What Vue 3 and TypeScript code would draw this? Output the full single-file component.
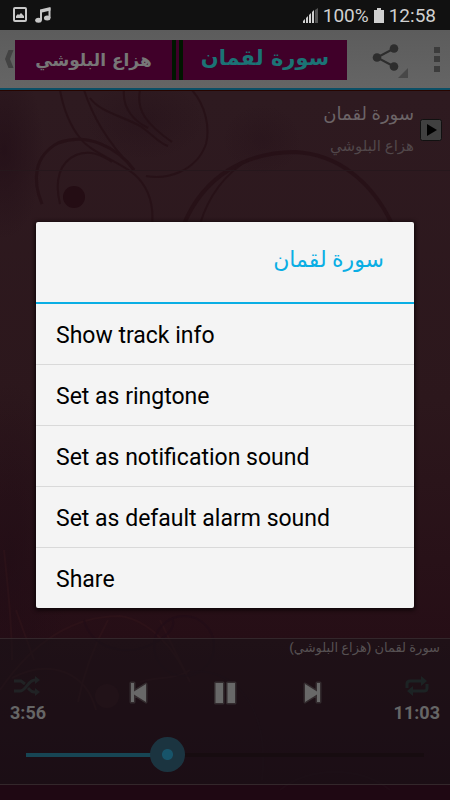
<script setup lang="ts">
import { computed, ref } from 'vue'

const surah = 'سورة لقمان'
const reciter = 'هزاع البلوشي'
const actions: string[] = [
  'Show track info',
  'Set as ringtone',
  'Set as notification sound',
  'Set as default alarm sound',
  'Share',
]
const duration = 663
const position = ref<number>(236)
const progress = computed(() => position.value / duration)

function clock(seconds: number): string {
  return Math.floor(seconds / 60) + ':' + String(seconds % 60).padStart(2, '0')
}
</script>

<template>
  <div class="screen">
    <svg class="ornament" viewBox="0 0 450 710" preserveAspectRatio="xMidYMin slice" aria-hidden="true">
      <defs>
        <radialGradient id="blotch">
          <stop offset="0" stop-color="#200c15" stop-opacity="0.6" />
          <stop offset="1" stop-color="#200c15" stop-opacity="0" />
        </radialGradient>
      </defs>
      <ellipse cx="4" cy="60" rx="40" ry="90" fill="url(#blotch)" />
      <ellipse cx="145" cy="30" rx="60" ry="40" fill="url(#blotch)" opacity="0.5" />
      <ellipse cx="262" cy="50" rx="40" ry="36" fill="url(#blotch)" opacity="0.4" />
      <ellipse cx="10" cy="470" rx="60" ry="180" fill="url(#blotch)" />
      <g fill="none" stroke="#250f15" stroke-width="2" opacity="0.75">
        <path d="M60 0C64 22 72 38 80 48C90 62 120 72 134 84C150 98 154 116 152 136" />
        <path d="M42 114C32 90 34 66 58 53C88 42 118 58 134 80" stroke-width="3" />
        <path d="M60 114C54 90 60 72 76 65C90 60 100 64 112 72" />
        <path d="M84 0C92 24 104 48 134 80" />
        <path d="M90 8C100 22 122 26 140 36C152 44 160 54 168 56" />
        <path d="M124 0C122 20 136 32 148 38" />
        <path d="M140 0C136 20 146 34 172 52" />
        <path d="M192 0C206 16 210 38 206 54C196 82 166 90 146 86" />
        <path d="M184 134C204 86 246 62 295 62C338 64 372 92 392 134" stroke-width="4" />
        <path d="M200 134C208 108 222 86 248 70" />
      </g>
      <circle cx="74" cy="107" r="11" fill="#240d14" />
      <g fill="none" stroke="#30141a" stroke-width="2" opacity="0.6">
        <path d="M0 600C30 556 70 526 120 526C150 530 176 560 190 592" />
        <path d="M12 588C50 568 86 582 96 620" />
        <path d="M78 612C84 580 94 556 108 530" />
        <path d="M4 460C8 500 12 530 12 570" />
        <path d="M16 520L34 570" />
        <path d="M140 592C160 586 176 590 190 580" />
        <path d="M160 530L186 584" />
      </g>
      <g fill="none" stroke="#220d17" stroke-width="2" opacity="0.7">
        <path d="M84 530C90 556 124 570 156 552C170 544 176 536 172 528" />
        <circle cx="184" cy="556" r="30" />
        <path d="M190 582C236 576 270 620 262 690" />
        <path d="M280 700C310 676 360 676 390 700" />
      </g>
      <circle cx="107" cy="606" r="12" fill="#30141a" opacity="0.6" />
    </svg>

    <div class="status">
      <div class="status-side">
        <svg width="14" height="16" viewBox="0 0 14 16" aria-hidden="true">
          <rect x="1" y="1" width="12" height="13" rx="1" fill="none" stroke="#c8c8c8" stroke-width="2" />
          <path d="M3 11V9l2-2 1 1 2-2 3 3v2z" fill="#c8c8c8" />
        </svg>
        <svg width="16" height="16" viewBox="0 0 16 16" aria-hidden="true">
          <path d="M5 2.4L15.500 0V3.400L7 5.400V13H5z" fill="#c8c8c8" />
          <path d="M13.500 1H15.500V11H13.500z" fill="#c8c8c8" />
          <ellipse cx="3.500" cy="13.200" rx="3.300" ry="2.500" fill="#c8c8c8" />
          <ellipse cx="12.200" cy="11" rx="3.300" ry="2.500" fill="#c8c8c8" />
        </svg>
      </div>
      <div class="status-side">
        <svg width="15" height="15" viewBox="0 0 15 15" aria-hidden="true">
          <path d="M0 15v-2l2-2v4zM3 15v-5l2-2v7zM6 15V7l2-2v10z" fill="#d0d0d0" />
          <path d="M9 15V4l2-2v13z" fill="#d0d0d0" />
          <path d="M12 15V2l3-2v15z" fill="#555" />
        </svg>
        <span>100%</span>
        <svg width="10" height="15" viewBox="0 0 10 15" aria-hidden="true">
          <path d="M3 0h4v2h3v13H0V2h3z" fill="#d0d0d0" />
        </svg>
        <span>12:58</span>
      </div>
    </div>

    <header class="bar">
      <button class="plain back" aria-label="Back">
        <svg width="10" height="18" viewBox="0 0 10 18" aria-hidden="true">
          <path d="M3.500 0H8.500L5 9l3.500 9H3.500L0 9z" fill="#434343" />
        </svg>
      </button>
      <div class="banner" dir="rtl">
        <span class="banner-surah">{{ surah }}</span>
        <span class="stripes"></span>
        <span class="banner-reciter">{{ reciter }}</span>
      </div>
      <button class="plain share" aria-label="Share">
        <svg width="36" height="34" viewBox="0 0 36 34" aria-hidden="true">
          <path d="M22 4.500L5 13.500l17 9" fill="none" stroke="#2d2d2d" stroke-width="2" />
          <g fill="#2d2d2d">
            <circle cx="22" cy="4.500" r="4.300" />
            <circle cx="5" cy="13.500" r="4.300" />
            <circle cx="22" cy="22.500" r="4.300" />
          </g>
          <path d="M36 24v10H26z" fill="#484848" />
        </svg>
      </button>
      <button class="plain more" aria-label="More options">
        <svg width="6" height="25" viewBox="0 0 6 25" aria-hidden="true">
          <path d="M0 0h6v6H0zM0 9h6v6H0zM0 19h6v6H0z" fill="#3c3c3c" />
        </svg>
      </button>
    </header>

    <main class="list">
      <button class="plain track" dir="rtl">
        <svg width="22" height="22" viewBox="0 0 22 22" aria-hidden="true">
          <rect x="0.500" y="0.500" width="21" height="21" rx="2" fill="#404040" stroke="#111" />
          <path d="M7 5l10 6-10 6z" fill="#000" />
        </svg>
        <span class="track-text">
          <span class="track-title">{{ surah }}</span>
          <span class="track-artist">{{ reciter }}</span>
        </span>
      </button>
    </main>

    <section class="player">
      <p class="now" dir="rtl">{{ surah }} ({{ reciter }})</p>
      <div class="controls">
        <div class="side">
          <button class="plain" aria-label="Shuffle">
            <svg width="28" height="20" viewBox="0 0 28 20" aria-hidden="true">
              <g fill="none" stroke="#202224" stroke-width="3">
                <path d="M1 5h7l4 3M1 15h6c6 0 8-11 15-11h1M15 12c2 2 3 4 6 4h2" />
              </g>
              <path d="M22 0l5 4-5 4zM22 12l5 4-5 4z" fill="#202224" />
            </svg>
          </button>
          <time>{{ clock(position) }}</time>
        </div>
        <div class="transport">
          <button class="plain" aria-label="Previous">
            <svg width="24" height="26" viewBox="0 0 24 26" aria-hidden="true">
              <path d="M5 3h3v8.500L20 4v18L8 14.500V22H5z" fill="#686868" stroke="#332b2e" stroke-width="3" stroke-linejoin="round" paint-order="stroke" />
            </svg>
          </button>
          <button class="plain" aria-label="Pause">
            <svg width="24" height="26" viewBox="0 0 24 26" aria-hidden="true">
              <path d="M2.500 3h7.500v20H2.500zM14.500 3h7.500v20h-7.500z" fill="#686868" stroke="#332b2e" stroke-width="3" stroke-linejoin="round" paint-order="stroke" />
            </svg>
          </button>
          <button class="plain" aria-label="Next">
            <svg width="24" height="26" viewBox="0 0 24 26" aria-hidden="true">
              <path d="M20 3h-3v8.500L5 4v18l12-7.500V22h3z" fill="#686868" stroke="#332b2e" stroke-width="3" stroke-linejoin="round" paint-order="stroke" />
            </svg>
          </button>
        </div>
        <div class="side end">
          <button class="plain repeat" aria-label="Repeat">
            <svg width="24" height="20" viewBox="0 0 24 20" aria-hidden="true">
              <g fill="none" stroke="#1c2324" stroke-width="3">
                <path d="M2 12V8c0-2 1-3 3-3h12M22 8v4c0 2-1 3-3 3H7" />
              </g>
              <path d="M16 0l6 5-6 5zM8 10l-6 5 6 5z" fill="#1c2324" />
            </svg>
          </button>
          <time>{{ clock(duration) }}</time>
        </div>
      </div>
      <input
        v-model.number="position"
        class="seek"
        type="range"
        min="0"
        :max="duration"
        aria-label="Playback position"
        :style="{ '--progress': progress }"
      />
    </section>

    <div class="shade">
      <div class="dialog" role="dialog" aria-labelledby="dialog-title">
        <h1 id="dialog-title" dir="rtl">{{ surah }}</h1>
        <ul>
          <li v-for="action in actions" :key="action">
            <button class="plain action">{{ action }}</button>
          </li>
        </ul>
      </div>
    </div>
  </div>
</template>

<style>
body {
  margin: 0;
  background: #1d0a12;
}
</style>

<style scoped>
.screen {
  position: relative;
  display: flex;
  flex-direction: column;
  box-sizing: border-box;
  min-height: 100vh;
  padding-bottom: 15px;
  overflow: hidden;
  background: linear-gradient(#2e1a20 12%, #2c171c 50%, #260e16 80%, #1f0813 98%);
  font-family: Roboto, "Noto Sans", "DejaVu Sans", sans-serif;
  color: #666;
}
.ornament {
  position: absolute;
  inset: 90px 0 0;
  width: 100%;
  height: calc(100% - 90px);
}
.plain {
  margin: 0;
  padding: 0;
  border: 0;
  background: none;
  color: inherit;
  font: inherit;
  cursor: pointer;
}
svg {
  display: block;
}
.status {
  position: relative;
  display: flex;
  justify-content: space-between;
  align-items: center;
  height: 30px;
  padding: 0 14px 0 13px;
  background: #111;
  color: #d0d0d0;
  font-size: 19px;
}
.status-side {
  display: flex;
  align-items: center;
  gap: 8px;
}
.status-side + .status-side {
  gap: 5px;
}
.bar {
  position: relative;
  display: flex;
  align-items: center;
  box-sizing: border-box;
  height: 60px;
  padding: 0 10px 0 5px;
  border-bottom: 2px solid #0b4f66;
  background: linear-gradient(#5c5c5c, #656565);
  box-shadow: 0 1px #270500;
}
.banner {
  display: flex;
  flex: 1;
  height: 40px;
  margin-top: 2px;
  background: #400029;
  font-family: "DejaVu Sans", sans-serif;
  font-weight: 700;
  line-height: 40px;
  text-align: center;
}
.banner-surah {
  flex: 164;
  color: #1b7375;
  font-size: 21px;
  line-height: 36px;
}
.stripes {
  width: 3px;
  border: solid #001600;
  border-width: 0 4px;
}
.banner-reciter {
  flex: 157;
  color: #777;
  font-size: 17px;
}
.share {
  margin: 4px 0 0 25px;
}
.more {
  margin-left: 26px;
}
.list {
  position: relative;
  flex: 1;
}
.track {
  display: flex;
  align-items: center;
  gap: 6px;
  width: 100%;
  height: 81px;
  padding: 0 8px;
  border-bottom: 1px solid #26171c;
  text-align: start;
}
.track-text {
  display: flex;
  flex-direction: column;
  gap: 8px;
}
.track-title {
  color: #6c6467;
  font-size: 18px;
  line-height: 24px;
}
.track-artist {
  color: #51474a;
  font-size: 15px;
  line-height: 24px;
}
.player {
  position: relative;
  border: solid #33272b;
  border-width: 1px 0;
  background: rgba(24, 20, 24, 0.5);
}
.now {
  margin: 0;
  padding: 0 10px;
  color: #565052;
  font-size: 13px;
  font-weight: 500;
  line-height: 18px;
}
.controls {
  display: grid;
  grid-template-columns: 1fr auto 1fr;
  align-items: start;
  padding: 19px 10px 0;
}
.side {
  display: flex;
  flex-direction: column;
  align-items: flex-start;
  gap: 6px;
  font-size: 18px;
  font-weight: 700;
  line-height: 22px;
}
.side .plain {
  margin-left: 3px;
}
.end {
  align-items: flex-end;
}
.side .repeat {
  margin-right: 11px;
}
.transport {
  display: flex;
  gap: 63px;
  padding-top: 4px;
}
.seek {
  display: block;
  width: calc(100% - 16px);
  height: 35px;
  margin: 13px 8px 12px;
  appearance: none;
  background:
    linear-gradient(#174554, #174554) 18px 50% / calc((100% - 35px) * var(--progress)) 4px no-repeat,
    linear-gradient(#170c10, #170c10) 18px 50% / calc(100% - 36px) 4px no-repeat;
  cursor: pointer;
}
.seek::-webkit-slider-thumb {
  width: 35px;
  height: 35px;
  appearance: none;
  border-radius: 50%;
  background: radial-gradient(circle, #17546a 5px, #1b3440 6px);
}
.shade {
  position: absolute;
  inset: 30px 0 0;
  display: flex;
  align-items: center;
  justify-content: center;
}
.dialog {
  width: 84%;
  border-radius: 2px;
  background: #f4f4f4;
  box-shadow: 0 1px 4px 1px #0c0407;
  color: #000;
}
.dialog h1 {
  margin: 0;
  padding: 18px 30px 22px;
  border-bottom: 2px solid #0aaee4;
  color: #0aaee4;
  font-size: 22px;
  font-weight: 400;
  line-height: 40px;
}
.dialog ul {
  margin: 0;
  padding: 0;
  list-style: none;
}
.dialog li + li {
  border-top: 1px solid #d9d9d9;
}
.action {
  display: block;
  width: 100%;
  padding: 4px 20px 0;
  font-size: 23px;
  line-height: 56px;
  text-align: left;
}
</style>
